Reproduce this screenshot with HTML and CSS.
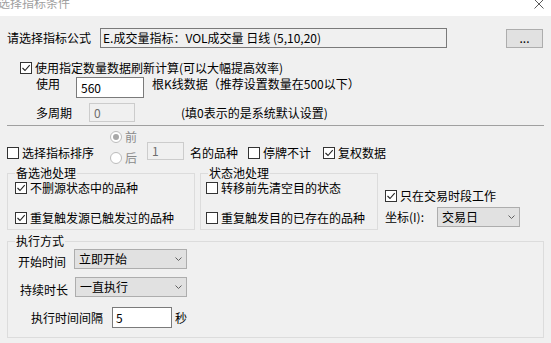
FILE: index.html
```html
<!DOCTYPE html>
<html lang="zh-CN">
<head>
<meta charset="utf-8">
<title>选择指标条件</title>
<link rel="stylesheet" href="styles.css">
</head>
<body>
<div class="titlebar">
  <span class="title">选择指标条件</span>
  <svg class="close" viewBox="0 0 10 10"><path d="M0.5 0.5 L9.5 9.5 M9.5 0.5 L0.5 9.5" stroke="#5a5a5a" stroke-width="1" fill="none"/></svg>
</div>
<div class="panel">
  <div class="row formula-row">
    <span class="formula-label">请选择指标公式</span>
    <div class="field readonly formula-field">E.成交量指标：VOL成交量 日线 (5,10,20)</div>
    <button class="btn-more">...</button>
  </div>

  <div class="row refresh-row">
    <label class="check"><span class="cb on"><svg viewBox="0 0 10 10"><path d="M1.5 5 L4 7.5 L8.7 2.2" fill="none" stroke="#222" stroke-width="1.1"/></svg></span>使用指定数量数据刷新计算(可以大幅提高效率)</label>
  </div>

  <div class="row use-row">
    <span class="use-label">使用</span>
    <div class="field use-field">560</div>
    <span class="use-note">根K线数据（推荐设置数量在500以下）</span>
  </div>

  <div class="row multi-row">
    <span class="multi-label">多周期</span>
    <div class="field disabled multi-field">0</div>
    <span class="multi-note">(填0表示的是系统默认设置)</span>
  </div>

  <div class="sep"></div>

  <div class="row sort-row">
    <label class="check sort-check"><span class="cb"></span>选择指标排序</label>
    <div class="radios">
      <label class="radio"><span class="rb sel"></span>前</label>
      <label class="radio radio-2"><span class="rb"></span>后</label>
    </div>
    <div class="field disabled rank-field">1</div>
    <span class="rank-text">名的品种</span>
    <label class="check stop-check"><span class="cb"></span>停牌不计</label>
    <label class="check adj-check"><span class="cb on"><svg viewBox="0 0 10 10"><path d="M1.5 5 L4 7.5 L8.7 2.2" fill="none" stroke="#222" stroke-width="1.1"/></svg></span>复权数据</label>
  </div>

  <div class="row groups">
    <fieldset class="group g1">
      <legend>备选池处理</legend>
      <label class="check grow"><span class="cb on"><svg viewBox="0 0 10 10"><path d="M1.5 5 L4 7.5 L8.7 2.2" fill="none" stroke="#222" stroke-width="1.1"/></svg></span>不删源状态中的品种</label>
      <label class="check grow grow-2"><span class="cb on"><svg viewBox="0 0 10 10"><path d="M1.5 5 L4 7.5 L8.7 2.2" fill="none" stroke="#222" stroke-width="1.1"/></svg></span>重复触发源已触发过的品种</label>
    </fieldset>
    <fieldset class="group g2">
      <legend>状态池处理</legend>
      <label class="check grow"><span class="cb"></span>转移前先清空目的状态</label>
      <label class="check grow grow-2"><span class="cb"></span>重复触发目的已存在的品种</label>
    </fieldset>
    <div class="side">
      <label class="check side-check"><span class="cb on"><svg viewBox="0 0 10 10"><path d="M1.5 5 L4 7.5 L8.7 2.2" fill="none" stroke="#222" stroke-width="1.1"/></svg></span>只在交易时段工作</label>
      <div class="coord-row">
        <span class="coord-label">坐标(I):</span>
        <div class="select coord-select"><span>交易日</span><svg class="chev" viewBox="0 0 7 4"><path d="M0.5 0.5 L3.5 3.5 L6.5 0.5" fill="none" stroke="#606060" stroke-width="1"/></svg></div>
      </div>
    </div>
  </div>

  <fieldset class="group exec">
    <legend>执行方式</legend>
    <div class="exec-row er1">
      <span class="er-label">开始时间</span>
      <div class="select sel1"><span>立即开始</span><svg class="chev" viewBox="0 0 7 4"><path d="M0.5 0.5 L3.5 3.5 L6.5 0.5" fill="none" stroke="#606060" stroke-width="1"/></svg></div>
    </div>
    <div class="exec-row er2">
      <span class="er-label">持续时长</span>
      <div class="select sel2"><span>一直执行</span><svg class="chev" viewBox="0 0 7 4"><path d="M0.5 0.5 L3.5 3.5 L6.5 0.5" fill="none" stroke="#606060" stroke-width="1"/></svg></div>
    </div>
    <div class="exec-row er3">
      <span class="er-label">执行时间间隔</span>
      <div class="field interval-field">5</div>
      <span class="sec">秒</span>
    </div>
  </fieldset>
</div>
</body>
</html>
```

FILE: styles.css
```css
* { box-sizing: border-box; }
html, body { margin: 0; padding: 0; }
body {
  width: 551px;
  height: 343px;
  overflow: hidden;
  background: #f0f0f0;
  font-family: "Noto Sans CJK SC", "Microsoft YaHei", sans-serif;
  font-size: 12px;
  line-height: 14px;
  color: #000;
}

.titlebar {
  height: 16px;
  background: #fff;
  display: flex;
  align-items: flex-start;
  overflow: hidden;
}
.title {
  margin: -4px 0 0 -2px;
  line-height: 14px;
  color: #a0a0a0;
}
.close {
  width: 10px;
  height: 10px;
  margin: -1px 7px 0 auto;
  flex: none;
}

.panel { padding: 0 7px; }
.row { display: flex; }

/* formula */
.formula-row { margin-top: 12px; height: 20px; align-items: center; }
.formula-label { width: 93px; flex: none; }
.field {
  border: 1px solid #7a7a7a;
  background: #fff;
  padding-left: 4px;
  flex: none;
  display: flex;
  align-items: center;
  white-space: nowrap;
  overflow: hidden;
}
.field.readonly { background: #f0f0f0; }
.field.disabled { border-color: #cccccc; background: #f0f0f0; color: #6d6d6d; }
.formula-field { width: 347px; height: 20px; padding-left: 2px; }
.btn-more {
  margin-left: 59px;
  width: 37px;
  height: 19px;
  padding: 0;
  border: 1px solid #adadad;
  background: #e1e1e1;
  font: inherit;
  color: #000;
  line-height: 14px;
}

/* checkbox */
.check { display: flex; align-items: center; white-space: nowrap; }
.cb {
  width: 12px;
  height: 12px;
  border: 1px solid #333;
  background: #fff;
  margin-right: 3px;
  flex: none;
  display: flex;
}
.cb svg { width: 10px; height: 10px; }

.refresh-row { margin-top: 13px; height: 14px; align-items: center; padding-left: 13px; }

/* use row */
.use-row { margin-top: 2px; height: 21px; align-items: flex-start; }
.use-label { margin-left: 29px; }
.use-field { margin-left: 16px; width: 68px; height: 21px; }
.use-note { margin: 0 0 0 8px; }

/* multi row */
.multi-row { margin-top: 5px; height: 19px; align-items: center; }
.multi-label { margin-left: 29px; }
.multi-field { margin-left: 17px; width: 46px; height: 19px; }
.multi-note { margin-left: 46px; }

.sep { margin-top: 3px; height: 1px; background: #a0a0a0; }

/* sort row */
.sort-row { margin-top: 4px; height: 36px; align-items: flex-start; }
.sort-check { margin-top: 16px; height: 14px; }
.radios { margin-left: 16px; display: flex; flex-direction: column; }
.radio { display: flex; align-items: center; height: 14px; color: #8a8a8a; }
.radio-2 { margin-top: 7px; }
.rb {
  width: 12px;
  height: 12px;
  border-radius: 50%;
  border: 1px solid #bcbcbc;
  background: #fff;
  margin-right: 3px;
  display: flex;
  align-items: center;
  justify-content: center;
}
.rb.sel::after {
  content: "";
  width: 6px;
  height: 6px;
  border-radius: 50%;
  background: #a8a8a8;
}
.rank-field { margin: 12px 0 0 10px; width: 37px; height: 18px; }
.rank-text { margin: 16px 0 0 6px; }
.stop-check { margin: 16px 0 0 10px; height: 14px; }
.adj-check { margin: 16px 0 0 12px; height: 14px; }

/* groups */
.groups { align-items: flex-start; }
.group {
  margin: 0;
  padding: 0 7px 3px;
  border: 1px solid #dcdcdc;
  min-width: 0;
}
.group legend { padding: 0 1px; line-height: 14px; }
.g1 { width: 188px; }
.g2 { width: 178px; margin-left: 5px; padding-left: 5px; }
.g2 legend { margin-left: 2px; }
.grow { height: 16px; }
.grow-2 { margin-top: 14px; }

.side { margin-left: 7px; display: flex; flex-direction: column; }
.side-check { margin-top: 22px; height: 16px; }
.coord-row { margin-top: 3px; display: flex; align-items: center; height: 20px; }
.select {
  display: flex;
  align-items: center;
  justify-content: space-between;
  height: 20px;
  border: 1px solid #adadad;
  background: #e1e1e1;
  padding: 0 4px;
  flex: none;
}
.chev { width: 7px; height: 4px; flex: none; }
.coord-select { margin-left: 13px; width: 83px; }

/* exec */
.exec { margin-top: 4px; width: 537px; padding-bottom: 9px; }
.exec-row { display: flex; }
.er-label { line-height: 14px; }
.er1 { margin: 1px 0 0 3px; align-items: flex-end; height: 20px; }
.er2 { margin: 8px 0 0 5px; align-items: flex-end; height: 20px; }
.er3 { margin: 10px 0 0 16px; align-items: center; height: 21px; }
.sel1 { margin-left: 8px; width: 113px; }
.sel2 { margin-left: 7px; width: 112px; }
.interval-field { margin-left: 9px; width: 60px; height: 21px; padding-left: 3px; }
.sec { margin-left: 3px; }
```
